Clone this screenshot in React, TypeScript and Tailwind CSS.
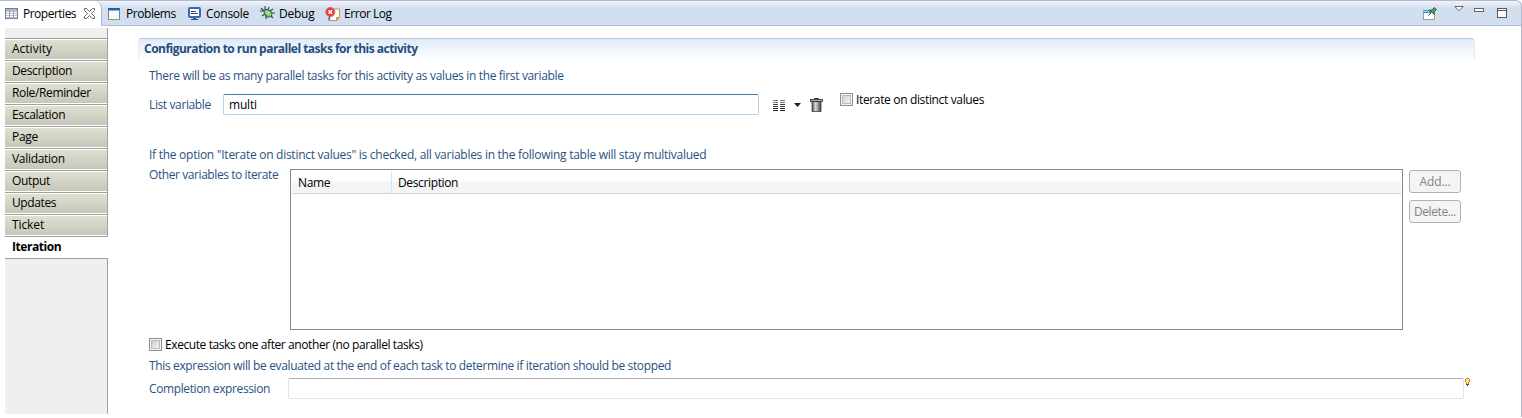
import type { ReactNode } from "react";

const sections = [
  { name: "Activity", tracking: "tracking-[0px]" },
  { name: "Description", tracking: "tracking-[-0.36px]" },
  { name: "Role/Reminder", tracking: "tracking-[-0.36px]" },
  { name: "Escalation", tracking: "tracking-[-0.32px]" },
  { name: "Page", tracking: "tracking-[-0.3px]" },
  { name: "Validation", tracking: "tracking-[-0.3px]" },
  { name: "Output", tracking: "tracking-[-0.35px]" },
  { name: "Updates", tracking: "tracking-[-0.4px]" },
  { name: "Ticket", tracking: "tracking-[-0.1px]" },
];

const PropertiesIcon = () => (
  <svg width="14" height="12" viewBox="0 0 14 12" shapeRendering="crispEdges">
    <rect x=".5" y=".5" width="12" height="10" fill="#fff" stroke="#6a7fa6" />
    <path d="M1 1h11v2H1z" fill="#a9bad6" />
    <path d="M1 3.5h11M1 5.5h11M1 7.5h11M1 9.5h11" stroke="#c4c2bc" />
    <path d="M4.5 1v10M8.5 3v8" stroke="#8da0c0" />
  </svg>
);

const CloseIcon = () => (
  <svg width="11" height="11" viewBox="0 0 11 11" fill="#fff" stroke="#666">
    <path d="M.5 .5h2l3 3 3-3h2v2l-3 3 3 3v2h-2l-3-3-3 3h-2v-2l3-3-3-3z" />
  </svg>
);

const ProblemsIcon = () => (
  <svg width="12" height="12" viewBox="0 0 12 12" shapeRendering="crispEdges">
    <rect x=".5" y=".5" width="11" height="11" fill="#f5faff" stroke="#6685b3" />
    <path d="M0 0h12v2H0z" fill="#2062a8" />
    <path d="M1 2h10v1H1z" fill="#83b5e4" />
    <path d="M1 3h1v8H1z" fill="#fff8d0" />
    <path d="M0 11h12v1H0z" fill="#a89050" />
  </svg>
);

const ConsoleIcon = () => (
  <svg width="14" height="13" viewBox="0 0 14 13">
    <rect x="1" y="1" width="11" height="9" rx="1" fill="#fff" stroke="#3d69ad" strokeWidth="2" />
    <path d="M3 4.5h5M3 6.5h7" stroke="#334a7d" />
    <path d="M5 11h3v1h2v1H3v-1h2z" fill="#28549b" />
  </svg>
);

const DebugIcon = () => (
  <svg width="15" height="14" viewBox="0 0 15 14">
    <path d="M5 0v4M9 1L8 4M0 5h4M1 2l3 3M2 10l3-2M6 13v-4M10 5l3-2M11 7h4M10 9l3 3" stroke="#1d4f4d" strokeWidth="1.1" fill="none" />
    <ellipse cx="8" cy="7.3" rx="4.3" ry="3.2" transform="rotate(40 8 7.3)" fill="#8fc37a" stroke="#26604c" />
    <path d="M6 5.5l3.5 3.5M7.5 5l3 3" stroke="#d4efb0" strokeWidth=".9" />
  </svg>
);

const ErrorIcon = () => (
  <svg width="16" height="15" viewBox="0 0 16 15">
    <path d="M4 2h10.5v8.5l-3 3H4z" fill="#fffdf3" stroke="#b69a58" />
    <path d="M14.5 10.5h-3v3z" fill="#dfb963" stroke="#a88032" strokeWidth=".7" />
    <path d="M5 9l-1 4" stroke="#315d9e" strokeWidth="1.3" />
    <circle cx="5.3" cy="5" r="4.6" fill="#e63b3b" stroke="#d87070" />
    <path d="M3.5 3.2l3.6 3.6M7.1 3.2L3.5 6.8" stroke="#fff" strokeWidth="1.5" />
  </svg>
);

const PinIcon = () => (
  <svg width="15" height="13" viewBox="0 0 15 13">
    <rect x=".5" y="3.5" width="11" height="9" fill="#fff" stroke="#a9a184" />
    <path d="M0 3h8v3H0z" fill="#348bd0" />
    <path d="M0 4h6v1H0z" fill="#a8d9f5" />
    <path d="M5.5 8.5l3-3" stroke="#333" />
    <path d="M6.5 3L9 3.2 11.2.5l2.3 2-2.5 2.5.3 2.4z" fill="#55a45a" stroke="#206a30" />
  </svg>
);

const ListIcon = () => (
  <svg width="13" height="12" viewBox="0 0 13 12" shapeRendering="crispEdges" stroke="#222">
    <path d="M0 .5h5M7 .5h5M0 2.5h5M7 2.5h5" stroke="#777" />
    <path d="M0 4.5h5M7 4.5h5M0 6.5h5M7 6.5h5" stroke="#444" />
    <path d="M0 8.5h5M7 8.5h5M0 10.5h5M7 10.5h5" />
  </svg>
);

const TrashIcon = () => (
  <svg width="13" height="14" viewBox="0 0 13 14">
    <defs>
      <linearGradient id="bin">
        <stop offset="0" stopColor="#555" />
        <stop offset=".4" stopColor="#d8d8d8" />
        <stop offset="1" stopColor="#444" />
      </linearGradient>
    </defs>
    <path d="M4.5 1V.5h4V1" stroke="#333" fill="none" />
    <path d="M2 3.5h9v10H2z" fill="url(#bin)" stroke="#2b2b2b" strokeWidth=".7" />
    <rect x=".5" y="1.5" width="12" height="2" fill="#aaa" stroke="#2b2b2b" strokeWidth=".8" />
  </svg>
);

const BulbIcon = () => (
  <svg width="5" height="8" viewBox="0 0 5 8" shapeRendering="crispEdges">
    <path d="M1 0h3v1h1v3H4v2H1V4H0V1h1z" fill="#dc7d18" />
    <path d="M1 1h3v3H3v2H2V4H1z" fill="#ffe9a0" />
    <path d="M1 6h3v1H1zM2 7h1v1H2z" fill="#47566e" />
  </svg>
);

const CheckBox = () => (
  <span className="flex h-[13px] w-[13px] shrink-0 items-center justify-center border border-[#8e8f8f] bg-[#f4f4f4]">
    <span className="h-[9px] w-[9px] border border-[#b8bcc2] bg-linear-to-br from-[#cbcfd5] to-[#f6f6f6]" />
  </span>
);

const Label = ({ className, children }: { className: string; children: ReactNode }) => (
  <div className={"flex shrink-0 items-center " + className}>
    <span>{children}</span>
  </div>
);

export default function App() {
  return (
    <div className="flex h-[418px] w-[1522px] flex-col overflow-hidden bg-white font-['Open_Sans','Noto_Sans',sans-serif] text-[12px] leading-4 whitespace-nowrap text-black">
      <header className="flex h-[26px] shrink-0 rounded-tr-md border-t border-r border-[#b5b9d0] bg-linear-to-b from-[#f0f3fa] via-[#d2dfee] via-30% to-[#cfdeef]">
        <div className="flex w-[102px] shrink-0 rounded-tr-[7px] border-r border-[#b5b9d0] bg-white pt-[7px] pl-[5px]">
          <PropertiesIcon />
          <span className="-mt-[2px] ml-1 w-[61px] tracking-[-0.5px]">Properties</span>
          <CloseIcon />
        </div>
        <nav className="flex grow border-b border-[#b5b9d0] pt-[5px] pl-[6px]">
          <span className="w-[18px] pt-[2px]"><ProblemsIcon /></span>
          <span className="w-[62px] tracking-[-0.45px]">Problems</span>
          <span className="w-[18px] pt-px"><ConsoleIcon /></span>
          <span className="w-[54px] tracking-[-0.25px]">Console</span>
          <span className="w-[19px]"><DebugIcon /></span>
          <span className="w-[46px] tracking-[-0.25px]">Debug</span>
          <span className="w-[19px] pt-px"><ErrorIcon /></span>
          <span className="tracking-[-0.45px]">Error Log</span>
          <div className="ml-auto flex pr-[14px]">
            <span className="w-[31px] pt-px"><PinIcon /></span>
            <svg className="w-[20px]" width="20" height="6" viewBox="0 0 20 6"><path d="M.8 .5h8.4L5 4.7z" fill="#fff" stroke="#666" /></svg>
            <svg className="mt-[2px] w-[23px]" width="23" height="4"><rect x=".5" y=".5" width="9" height="3" fill="#fff" stroke="#666" /></svg>
            <svg className="mt-[2px]" width="10" height="10" shapeRendering="crispEdges"><rect x=".5" y=".5" width="9" height="9" fill="#fff" stroke="#555" /><path d="M0 2.5h10" stroke="#555" /></svg>
          </div>
        </nav>
      </header>

      <div className="flex h-[391px] shrink-0 border-r border-[#b5b9d0] pl-[5px]">
        <aside className="mt-[2px] flex h-[386px] w-[103px] shrink-0 flex-col bg-[#efefef]">
          <div className="h-[10px] shrink-0 border-r border-[#a0a0a0]" />
          {sections.map(({ name, tracking }) => (
            <div key={name} className="h-[22px] shrink-0 border-t border-r border-[#a0a0a0] bg-white py-px">
              <div className={"h-[19px] bg-linear-to-b from-[#dfe0d0] to-[#c6c7ba] pt-px pl-[7px] " + tracking}>{name}</div>
            </div>
          ))}
          <div className="h-[22px] shrink-0 border-t border-[#a0a0a0] bg-white pt-[2px] pl-[7px] font-bold tracking-[-0.45px]">Iteration</div>
          <div className="grow border-t border-r border-[#a0a0a0]" />
        </aside>

        <main className="flex w-[1367px] shrink-0 flex-col pl-[30px] text-[#29527f]">
          <div className="mt-[12px] h-[22px] w-[1337px] shrink-0 rounded-t-[4px] border-x border-t border-x-[#e3ebf4] border-t-[#b4c9df] bg-linear-to-b from-[#e1eaf3] to-white pt-[2px] pl-[5px] font-bold text-[#1f4e83]">
            <span className="tracking-[-0.52px]">Configuration to run parallel tasks for this activity</span>
          </div>
          <Label className="mt-[8px] h-4 pl-[11px] tracking-[-0.34px]">There will be as many parallel tasks for this activity as values in the first variable</Label>
          <div className="mt-[10px] flex h-[22px] shrink-0 pl-[11px]">
            <span className="w-[74px] pt-[3px] tracking-[-0.38px]">List variable</span>
            <div className="h-[21px] w-[536px] rounded-[2px] border border-[#b3d3ea] border-t-[#3d7bad] pt-[2px] pl-[5px] tracking-[-0.2px] text-black">multi</div>
            <span className="mt-[6px] ml-[14px]"><ListIcon /></span>
            <svg className="mt-[9px] ml-[8px]" width="7" height="4"><path d="M0 0h7L3.5 4z" fill="#222" /></svg>
            <span className="mt-[4px] ml-[9px]"><TrashIcon /></span>
            <div className="-mt-px ml-[17px] flex h-[13px] items-center gap-[3px] tracking-[-0.35px] text-black">
              <CheckBox />
              <span>Iterate on distinct values</span>
            </div>
          </div>
          <Label className="mt-[31px] h-4 pl-[11px] tracking-[-0.27px]">If the option "Iterate on distinct values" is checked, all variables in the following table will stay multivalued</Label>
          <div className="mt-[6px] flex shrink-0 pl-[11px]">
            <span className="-mt-[2px] w-[141px] tracking-[-0.42px]">Other variables to iterate</span>
            <div className="h-[161px] w-[1113px] shrink-0 border border-[#828790] p-px tracking-[-0.36px] text-black">
              <div className="flex h-[23px] border-b border-[#d5d5d5] bg-linear-to-b from-white from-40% to-[#f3f4f6] to-55%">
                <div className="w-[100px] border-r border-[#dfe0e2] pt-[4px] pl-[6px]">Name</div>
                <div className="pt-[4px] pl-[6px]">Description</div>
              </div>
            </div>
            <div className="ml-[6px] flex flex-col gap-[7px] pt-px text-center tracking-[-0.4px] text-[#838383]">
              <div className="h-[23px] w-[52px] rounded-[3px] border border-[#adb2b5] bg-[#f4f4f4] pt-[3px]"><span className="tracking-[-0.1px]">Add...</span></div>
              <div className="h-[23px] w-[52px] rounded-[3px] border border-[#adb2b5] bg-[#f4f4f4] pt-[3px]">Delete...</div>
            </div>
          </div>
          <div className="mt-[8px] flex h-[13px] shrink-0 items-center gap-[3px] pl-[11px] tracking-[-0.41px] text-black">
            <CheckBox />
            <span>Execute tasks one after another (no parallel tasks)</span>
          </div>
          <Label className="mt-[7px] h-4 pl-[11px] tracking-[-0.355px]">This expression will be evaluated at the end of each task to determine if iteration should be stopped</Label>
          <div className="mt-[4px] flex shrink-0 pl-[11px]">
            <span className="w-[139px] pt-[3px] tracking-[-0.38px]">Completion expression</span>
            <div className="h-[21px] w-[1176px] shrink-0 rounded-[2px] border border-[#e2e3ea] border-t-[#abadb3]" />
            <span className="ml-px"><BulbIcon /></span>
          </div>
        </main>
      </div>
    </div>
  );
}
